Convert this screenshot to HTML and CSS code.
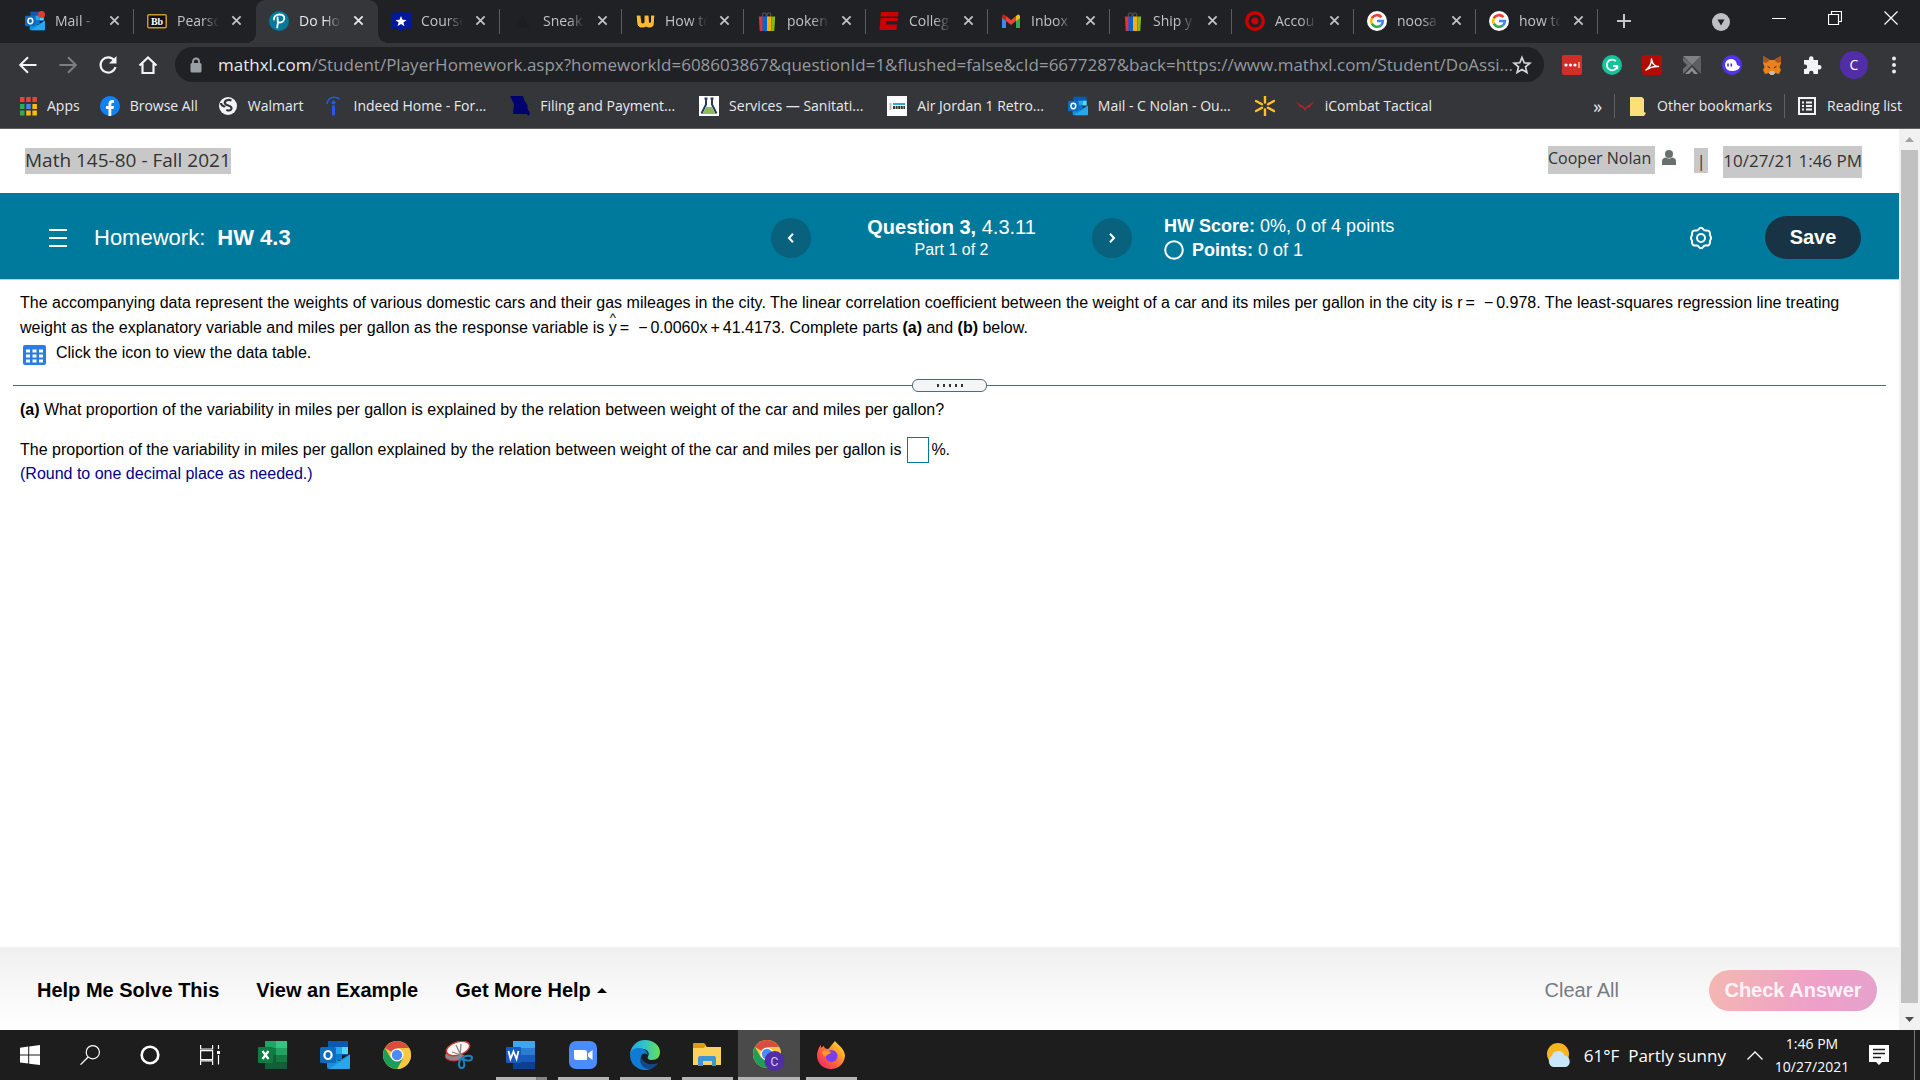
FILE: index.html
```html
<!DOCTYPE html>
<html lang="en">
<head>
<meta charset="utf-8">
<meta name="viewport" content="width=device-width, initial-scale=1">
<title>Do Homework - HW 4.3</title>
<link rel="stylesheet" href="styles.css">
</head>
<body>
<svg class="defs" aria-hidden="true">
  <symbol id="close" viewBox="0 0 12 12"><path d="M1.5 1.5l9 9M10.500 1.500l-9 9" stroke="currentColor" stroke-width="2" fill="none"/></symbol>
  <symbol id="outlook" viewBox="0 0 30 28">
    <path d="M8 0h20v14H8z" fill="#0a5bb0"/><path d="M8 6h7v7H8z" fill="#0364b8"/><path d="M15 6h7v7h-7z" fill="#28a8ea"/><path d="M22 6h6v7h-6z" fill="#50d9ff"/><path d="M15 13h7v6h-7z" fill="#0078d4"/>
    <path d="M7 13l12 7 11-7v15H9a2 2 0 0 1-2-2z" fill="#1490df"/><path d="M30 14v12a2 2 0 0 1-2 2H9z" fill="#35b8f1" opacity=".6"/>
    <rect y="6" width="16" height="16" rx="1.500" fill="#0f6cbd"/><ellipse cx="8" cy="14" rx="3.600" ry="4" fill="none" stroke="#fff" stroke-width="2.200"/>
  </symbol>
  <symbol id="ebay" viewBox="0 0 20 22"><path d="M5 6V4a2 2 0 0 1 4 0v2M10 6V4a2 2 0 0 1 4 0v2" fill="none" stroke="#4c4c4c" stroke-width="1.500"/><path d="M1 6h5v16H2z" fill="#e53238"/><path d="M5 6h5v16H5z" fill="#0064d2"/><path d="M10 6h5v16h-5z" fill="#f5af02"/><path d="M15 6h4l-1 16h-3z" fill="#86b817"/></symbol>
  <symbol id="google" viewBox="0 0 20 20"><circle cx="10" cy="10" r="10" fill="#fff"/><g fill="none" stroke-width="2.600"><path d="M14.400 6.100A5.900 5.900 0 0 0 4.800 7.300" stroke="#ea4335"/><path d="M4.800 7.300a5.900 5.900 0 0 0 0 5.400" stroke="#fbbc05"/><path d="M4.800 12.700a5.900 5.900 0 0 0 9 1.700" stroke="#34a853"/><path d="M13.800 14.400A5.900 5.900 0 0 0 15.900 10H10" stroke="#4285f4"/></g></symbol>
  <symbol id="chrome" viewBox="0 0 28 28"><circle cx="14" cy="14" r="14" fill="#fbc740"/><path d="M14 14L1.900 7A14 14 0 0 1 26.100 7z" fill="#d94c40"/><path d="M14 7h12.100A14 14 0 0 1 14 28l6-10.500z" fill="#fbc740"/><path d="M1.900 7A14 14 0 0 0 14 28l6-10.500L8 17.500z" fill="#1d9c5a"/><circle cx="14" cy="14" r="6.500" fill="#fff"/><circle cx="14" cy="14" r="5.200" fill="#4c8bf5"/></symbol>
</svg>

<header class="browser">
  <div class="tabstrip">
    <div class="tab"><svg class="fav"><use href="#outlook"/></svg><span class="dot"></span><span class="title">Mail -</span><button class="x" aria-label="Close tab"><svg><use href="#close"/></svg></button></div>
    <div class="tab noline"><svg class="fav" viewBox="0 0 20 20"><rect x=".8" y="3.800" width="18.400" height="13" rx="1" fill="#111" stroke="#c99a2e" stroke-width="1.500"/><text x="10" y="14" font-family="Liberation Serif" font-weight="bold" font-size="10" text-anchor="middle" fill="#fff">Bb</text></svg><span class="title">Pearso</span><button class="x" aria-label="Close tab"><svg><use href="#close"/></svg></button></div>
    <div class="tab active noline"><svg class="fav" viewBox="0 0 20 20"><circle cx="10" cy="10" r="10" fill="#037a9c"/><path d="M8.200 16.500c.8-3 .8-6.500.3-10M5 8.500c-.5-3 2-5 5.500-5 3 0 4.800 1.500 4.800 3.800 0 2.700-2.200 4.300-5.500 4.200" fill="none" stroke="#fff" stroke-width="1.800" stroke-linecap="round"/></svg><span class="title">Do Ho</span><button class="x" aria-label="Close tab"><svg><use href="#close"/></svg></button></div>
    <div class="tab"><svg class="fav" viewBox="0 0 20 20"><path d="M0 1l3 1 7-1 7 1 3-1v17l-5-1-5 3-5-3-5 1z" fill="#00189b"/><path d="M10 5l1.500 3.700 4 .2-3.100 2.500 1.100 3.900L10 13.100l-3.500 2.200 1.100-3.900-3.100-2.500 4-.2z" fill="#fff"/></svg><span class="title">Course</span><button class="x" aria-label="Close tab"><svg><use href="#close"/></svg></button></div>
    <div class="tab"><svg class="fav" viewBox="0 0 20 20"><path d="M3 17l7-13 7 13z" fill="#1d1e21"/></svg><span class="title">Sneak</span><button class="x" aria-label="Close tab"><svg><use href="#close"/></svg></button></div>
    <div class="tab"><svg class="fav" viewBox="0 0 20 20"><path d="M1 4h5v1.500L7 12l2-.5V4h5l.5 7.500 1-.5V4H20l-1 11-3 2h-3l-2-1-2 1H5l-3-3z" fill="#fdb933" stroke="#15161a"/></svg><span class="title">How to</span><button class="x" aria-label="Close tab"><svg><use href="#close"/></svg></button></div>
    <div class="tab"><svg class="fav"><use href="#ebay"/></svg><span class="title">poken</span><button class="x" aria-label="Close tab"><svg><use href="#close"/></svg></button></div>
    <div class="tab"><svg class="fav" viewBox="0 0 20 20"><path d="M2 1h17.500l-.5 4.500H1.500zM1.500 7H19l-.4 3H7.500l-.3 3.500H18L17.500 19H.5z" fill="#c00"/></svg><span class="title">Colleg</span><button class="x" aria-label="Close tab"><svg><use href="#close"/></svg></button></div>
    <div class="tab"><svg class="fav" viewBox="0 0 20 20"><path d="M1 5v12h4V9z" fill="#4285f4"/><path d="M19 5v12h-4V9z" fill="#34a853"/><path d="M1 5.500V7l4 3V5L3.500 3.800A1.700 1.700 0 0 0 1 5.500z" fill="#c5221f"/><path d="M15 5v5l4-3V5.500a1.700 1.700 0 0 0-2.500-1.700z" fill="#fbbc04"/><path d="M5 5l5 4 5-4v5l-5 4-5-4z" fill="#ea4335"/></svg><span class="title">Inbox</span><button class="x" aria-label="Close tab"><svg><use href="#close"/></svg></button></div>
    <div class="tab"><svg class="fav"><use href="#ebay"/></svg><span class="title">Ship y</span><button class="x" aria-label="Close tab"><svg><use href="#close"/></svg></button></div>
    <div class="tab"><svg class="fav" viewBox="0 0 20 20"><circle cx="10" cy="10" r="8.300" fill="none" stroke="#c00" stroke-width="3.400"/><circle cx="10" cy="10" r="3.400" fill="#c00"/></svg><span class="title">Accou</span><button class="x" aria-label="Close tab"><svg><use href="#close"/></svg></button></div>
    <div class="tab"><svg class="fav"><use href="#google"/></svg><span class="title">noosa</span><button class="x" aria-label="Close tab"><svg><use href="#close"/></svg></button></div>
    <div class="tab"><svg class="fav"><use href="#google"/></svg><span class="title">how to</span><button class="x" aria-label="Close tab"><svg><use href="#close"/></svg></button></div>
    <button class="newtab" aria-label="New tab"><svg viewBox="0 0 16 16"><path d="M8 1v14M1 8h14" stroke="#c4c7cb" stroke-width="2"/></svg></button>
    <div class="winctl">
      <button aria-label="Search tabs"><svg width="18" height="18" viewBox="0 0 18 18"><circle cx="9" cy="9" r="9" fill="#bcc0c4"/><path d="M5.500 6.500h7L9 12.500z" fill="#202124"/></svg></button>
      <button aria-label="Minimize"><svg width="14" height="14" viewBox="0 0 14 14"><path d="M0 7.500h14" stroke="#fff"/></svg></button>
      <button aria-label="Restore"><svg width="14" height="14" viewBox="0 0 14 14"><path d="M.5 3.500h10v10H.5zM3.500 3.500v-3h10v10h-3" fill="none" stroke="#fff" stroke-width="1.200"/></svg></button>
      <button aria-label="Close window"><svg width="14" height="14" viewBox="0 0 14 14"><path d="M.5.5l13 13M13.500.5l-13 13" stroke="#fff" stroke-width="1.200"/></svg></button>
    </div>
  </div>

  <nav class="toolbar" aria-label="Browser toolbar">
    <button aria-label="Back"><svg viewBox="0 0 20 20"><path d="M18.500 10h-16M10 2.200L2.200 10l7.800 7.800" fill="none" stroke="#f1f3f4" stroke-width="2"/></svg></button>
    <button aria-label="Forward"><svg viewBox="0 0 20 20"><path d="M1.500 10h16M10 2.200l7.800 7.800-7.800 7.800" fill="none" stroke="#7b7e82" stroke-width="2"/></svg></button>
    <button aria-label="Reload"><svg viewBox="0 0 20 20"><path d="M16.300 5.500A7.600 7.600 0 1 0 17.500 12" fill="none" stroke="#f1f3f4" stroke-width="2.100"/><path d="M18.500 1v7.500H11z" fill="#f1f3f4"/></svg></button>
    <button aria-label="Home"><svg viewBox="0 0 20 20"><path d="M1.500 10.500L10 2.500l8.500 8M4.500 8.500V18h11V8.500" fill="none" stroke="#f1f3f4" stroke-width="2.200"/></svg></button>
    <div class="omnibox">
      <svg class="lock" viewBox="0 0 12 16"><path d="M3 7V4.500a3 3 0 0 1 6 0V7" fill="none" stroke="#9aa0a6" stroke-width="1.800"/><rect x=".5" y="6" width="11" height="9.500" rx="1.500" fill="#9aa0a6"/></svg>
      <label for="address">mathxl.com</label><input id="address" type="text" value="/Student/PlayerHomework.aspx?homeworkId=608603867&amp;questionId=1&amp;flushed=false&amp;cId=6677287&amp;back=https://www.mathxl.com/Student/DoAssi...">
      <button aria-label="Bookmark this tab"><svg viewBox="0 0 20 20"><path d="M10 2.500l2.200 5.300 5.700.4-4.400 3.700 1.400 5.600-4.900-3-4.900 3 1.400-5.600-4.400-3.700 5.700-.4z" fill="none" stroke="#d5d8db" stroke-width="1.700"/></svg></button>
    </div>
    <div class="exts">
      <button aria-label="Password manager"><svg viewBox="0 0 20 20"><rect width="20" height="20" rx="2" fill="#d32d27"/><circle cx="4" cy="10" r="1.600" fill="#fff"/><circle cx="8.500" cy="10" r="1.600" fill="#fff"/><circle cx="13" cy="10" r="1.600" fill="#fff"/><path d="M17 7v6" stroke="#fff"/></svg></button>
      <button aria-label="Grammar checker"><svg viewBox="0 0 20 20"><circle cx="10" cy="10" r="10" fill="#15c39a"/><path d="M13.800 6.200A5.300 5.300 0 1 0 15.300 11H11M15.300 11v3.300" fill="none" stroke="#fff" stroke-width="1.800"/></svg></button>
      <button aria-label="PDF tools"><svg viewBox="0 0 20 20"><rect width="20" height="20" rx="3" fill="#b30b00"/><path d="M4 15c3-2 6-6.500 5.500-11 .8 5 3.500 7.500 7 7.500C12 11 7.500 12.500 4 15z" fill="none" stroke="#fff" stroke-width="1.500" stroke-linejoin="round"/></svg></button>
      <button aria-label="Page marker"><svg viewBox="0 0 20 20"><path d="M1 1h18L10 10z" fill="#7e8082"/><path d="M19 1v18L10 10z" fill="#5c5e60"/><path d="M1 2l9 8-9 9v-5l4-4-4-4z" fill="#6b6d6f"/><path d="M10 12l6 7h-4l-2-3-3 3H3z" fill="#8b8d8f"/></svg></button>
      <button aria-label="Ghost"><svg viewBox="0 0 20 20"><circle cx="10" cy="10" r="10" fill="#5333ed"/><path d="M3.500 12C2 8 5 3.500 9.500 4c4 .3 5 3 5.300 5.500 1 1.500 2.500 1 3.200 2-1 3.500-4.500 4.500-8 4.500-3 0-5.500-1-6.500-4z" fill="#fff"/><path d="M6 8.500v3M9.300 8.500v3" stroke="#4a35b5" stroke-width="1.600"/></svg></button>
      <button aria-label="Fox wallet"><svg viewBox="0 0 20 20"><path d="M1 1l7 4h4l7-4v7l-1.500 4 1.500 3-2 4-4-1-2 2H9l-2-2-4 1-2-4 1.500-3L1 8z" fill="#e8821e"/><path d="M1 1l7 4-4 3-3-1zM19 1l-7 4 4 3 3-1z" fill="#a9551d"/><path d="M5 11l3 1-.5 1.500zM15 11l-3 1 .5 1.500z" fill="#233447"/><path d="M8 16h4l1 2.500-2 1.500H9l-2-1.500z" fill="#c9bcb3"/></svg></button>
      <button aria-label="Extensions"><svg viewBox="0 0 20 20"><path d="M2 5h5V3.500a2 2 0 0 1 4.500 0V5H16v5h1.300a2.200 2.200 0 0 1 0 4.500H16V19h-4.500v-1a2.200 2.200 0 0 0-4.400 0v1H2v-5h1a2.200 2.200 0 0 0 0-4.400H2z" fill="#f1f3f4"/></svg></button>
      <button class="avatar" aria-label="Profile">C</button>
      <button class="kebab" aria-label="Menu"><svg viewBox="0 0 20 20"><g fill="#e8eaed"><circle cx="10" cy="3.500" r="2"/><circle cx="10" cy="10" r="2"/><circle cx="10" cy="16.500" r="2"/></g></svg></button>
    </div>
  </nav>

  <nav class="bookmarks" aria-label="Bookmarks">
    <a href="#"><svg class="apps" viewBox="0 0 17 20"><g fill="#ea4335"><path d="M0 1h4.500v5H0zM6.200 1h4.500v5H6.200zM12.400 1h4.500v5h-4.500z"/></g><path d="M0 8h4.500v5H0zM0 14.500h4.500v5H0z" fill="#34a853"/><path d="M6.200 8h4.500v5H6.200z" fill="#4285f4"/><path d="M12.400 8h4.500v5h-4.500zM6.200 14.500h4.500v5H6.200zM12.400 14.500h4.500v5h-4.500z" fill="#fbbc05"/></svg>Apps</a>
    <a href="#"><svg viewBox="0 0 20 20"><circle cx="10" cy="10" r="10" fill="#0f83f5"/><path d="M8.500 20v-7H6v-3h2.500V7.800C8.500 5.300 10 4 12.200 4l1.800.2v2.500h-1.200c-1.200 0-1.500.7-1.500 1.500V10H14l-.5 3h-2.200v7z" fill="#fff"/></svg>Browse All</a>
    <a href="#"><svg viewBox="0 0 20 20"><circle cx="10" cy="10" r="9" fill="#f1f3f4"/><path d="M13.500 4.500c-4-1.500-7.500.5-6.500 3s7 1.500 6.500 5c-.5 2.500-4 2.500-5 1M3 7c0 3 3 3 4 4" fill="none" stroke="#35363a" stroke-width="2.200"/></svg>Walmart</a>
    <a class="long" href="#"><svg viewBox="0 0 20 20"><path d="M3 8C4 1.500 10-.5 15.500 3" fill="none" stroke="#2557e8" stroke-width="1.600"/><circle cx="9.500" cy="6.500" r="2" fill="#2557e8"/><path d="M8 9.500h3V19l-1.500 1L8 19z" fill="#2557e8"/></svg>Indeed Home - For...</a>
    <a class="long" href="#"><svg viewBox="0 0 20 20"><path d="M0 0h13l1.500 5 3 4v4l2.500 4-1.500 3-2-2H3L4 8z" fill="#00006e"/></svg>Filing and Payment...</a>
    <a class="long" href="#"><svg viewBox="0 0 20 20"><path d="M0 0h20v20H0z" fill="#fff"/><path d="M5.500 2.500h3M7 2.500v6l-4.500 9M11.500 2.500h3M13 2.500v6l4.500 9" fill="none" stroke="#243b60" stroke-width="2"/><path d="M7 11h6l3.500 7h-13z" fill="#8dbb5c"/></svg>Services — Sanitati...</a>
    <a class="long" href="#"><svg viewBox="0 0 20 20"><path d="M0 0h20v20H0z" fill="#fff"/><path d="M6 8h12" stroke="#29a9d6" stroke-width="2"/><path d="M6 11.500h12" stroke="#333" stroke-width="3" stroke-dasharray="2 .6"/><path d="M3.500 7v7" stroke="#bbb" stroke-width="2"/></svg>Air Jordan 1 Retro...</a>
    <a class="long" href="#"><svg><use href="#outlook"/></svg>Mail - C Nolan - Ou...</a>
    <a href="#" aria-label="Walmart deals"><svg viewBox="0 0 20 20"><path d="M10 0v6.500M10 13.500V20M1 5l6 3.200M13 11.800L19 15M1 15l6-3.200M13 8.200L19 5" stroke="#ffc220" stroke-width="2.400" stroke-linecap="round"/></svg></a>
    <a href="#"><svg viewBox="0 0 20 20"><path d="M0 5l8 5 2 2 2-2 8-5-5 6-3 1-2 3-2-3-3-1z" fill="#a32630"/></svg>iCombat Tactical</a>
    <span class="more">»</span>
    <a class="side" href="#"><svg viewBox="0 0 20 20"><path d="M3 1h12l2 2v13l2 1-2 3H3z" fill="#fcdf78"/></svg>Other bookmarks</a>
    <a class="side" href="#"><svg viewBox="0 0 20 20"><path d="M2 2h16v16H2z" fill="none" stroke="#f1f3f4" stroke-width="2"/><path d="M5 6.500h2M9 6.500h6M5 10h2M9 10h6M5 13.500h2M9 13.500h6" stroke="#f1f3f4" stroke-width="1.800"/></svg>Reading list</a>
  </nav>
</header>

<div class="viewport">
  <main class="page">
    <div class="course">
      <h1 class="sel">Math 145-80 - Fall 2021</h1>
      <div class="user">
        <span class="sel name">Cooper Nolan</span>
        <svg class="person" viewBox="0 0 14 15"><circle cx="7" cy="4" r="4" fill="#6a6f70"/><path d="M0 15v-3.500C0 8.500 2 7.500 4 7.500c2 1.500 4 1.500 6 0 2 0 4 1 4 4V15z" fill="#6a6f70"/></svg>
        <span class="sel bar">|</span>
        <span class="sel date">10/27/21 1:46 PM</span>
      </div>
    </div>

    <div class="hwbar">
      <div class="hwname">
        <button class="plain" aria-label="Open menu"><svg width="18" height="18" viewBox="0 0 18 18"><path d="M0 1h18M0 9h18M0 17h18" stroke="#fff" stroke-width="2"/></svg></button>
        <h2>Homework: <b>HW 4.3</b></h2>
      </div>
      <div class="question">
        <button class="round" aria-label="Previous question"><svg width="8" height="10" viewBox="0 0 8 10"><path d="M6 .8L2 5l4 4.200" fill="none" stroke="#fff" stroke-width="2"/></svg></button>
        <div class="qtext"><p><b>Question 3,</b> 4.3.11</p><p class="part">Part 1 of 2</p></div>
        <button class="round" aria-label="Next question"><svg width="8" height="10" viewBox="0 0 8 10"><path d="M2 .8L6 5 2 9.200" fill="none" stroke="#fff" stroke-width="2"/></svg></button>
      </div>
      <div class="score"><p><b>HW Score:</b> 0%, 0 of 4 points</p><p class="pts"><svg width="20" height="20" viewBox="0 0 20 20"><circle cx="10" cy="10" r="8.800" fill="none" stroke="#fff" stroke-width="2"/></svg><span><b>Points:</b> 0 of 1</span></p></div>
      <button class="plain gear" aria-label="Settings"><svg width="22" height="24" viewBox="0 0 22 24"><path d="M8.500 3.500Q11 0 13.500 3.500q.8 1.200 2.300 1 4.200-.6 4.200 3.500-.2 1.300.5 2.300 1 1.700 0 3.400-.7 1-.5 2.300 0 4.100-4.200 3.500-1.500-.2-2.300 1Q11 24 8.500 20.500q-.8-1.200-2.300-1Q2 20.100 2 16q.2-1.300-.5-2.300-1-1.700 0-3.400Q2.200 9.300 2 8q0-4.100 4.200-3.500 1.500.2 2.300-1z" fill="none" stroke="#fff" stroke-width="2"/><circle cx="11" cy="12" r="4" fill="none" stroke="#fff" stroke-width="2"/></svg></button>
      <button class="save">Save</button>
    </div>

    <section class="problem">
      <p>The accompanying data represent the weights of various domestic cars and their gas mileages in the city. The linear correlation coefficient between the weight of a car and its miles per gallon in the city is r<span class="op">=</span><span class="op neg">−</span>0.978. The least-squares regression line treating weight as the explanatory variable and miles per gallon as the response variable is <span class="hat">y</span><span class="op">=</span><span class="op neg">−</span>0.0060x<span class="op">+</span>41.4173. Complete parts <b>(a)</b> and <b>(b)</b> below.</p>
      <button class="datalink"><svg width="23" height="20" viewBox="0 0 23 20"><rect width="23" height="20" rx="2" fill="#2a7de1"/><path d="M3 4.500h4v3H3zM9.500 4.500h4v3h-4zM16 4.500h4v3h-4zM3 9.500h4v3H3zM9.500 9.500h4v3h-4zM16 9.500h4v3h-4zM3 14.500h4v3H3zM9.500 14.500h4v3h-4zM16 14.500h4v3h-4z" fill="#fff"/></svg>Click the icon to view the data table.</button>
    </section>

    <div class="divider"><button aria-label="Resize panes"><i></i><i></i><i></i><i></i><i></i></button></div>

    <section class="answer">
      <p><b>(a)</b> What proportion of the variability in miles per gallon is explained by the relation between weight of the car and miles per gallon?</p>
      <p class="fill"><label for="ans">The proportion of the variability in miles per gallon explained by the relation between weight of the car and miles per gallon is</label><input id="ans" type="text">%.</p>
      <p class="hint">(Round to one decimal place as needed.)</p>
    </section>

    <footer class="actions">
      <button>Help Me Solve This</button>
      <button>View an Example</button>
      <button>Get More Help <svg width="10" height="6" viewBox="0 0 10 6"><path d="M0 6l5-5 5 5z" fill="#000"/></svg></button>
      <button class="clear">Clear All</button>
      <button class="check">Check Answer</button>
    </footer>
  </main>
  <div class="scroll" aria-hidden="true">
    <svg viewBox="0 0 21 21"><path d="M6 13l4.500-5 4.500 5z" fill="#a3a3a3"/></svg>
    <div class="thumb"></div>
    <svg class="down" viewBox="0 0 21 27"><path d="M6 14l4.500 5 4.500-5z" fill="#505050"/></svg>
  </div>
</div>

<div class="taskbar">
  <div class="group">
    <button class="sys" aria-label="Start"><svg width="20" height="20" viewBox="0 0 20 20"><path d="M0 2.800l8.200-1.200v8H0zM9.200 1.400L20 0v9.600H9.200zM0 10.600h8.200v8L0 17.400zM9.200 10.600H20V20L9.200 18.700z" fill="#fff"/></svg></button>
    <button class="sys" aria-label="Search"><svg width="20" height="20" viewBox="0 0 20 20"><circle cx="12.800" cy="7.200" r="6.600" fill="none" stroke="#fff" stroke-width="1.200"/><path d="M8.200 12L.5 19.600" stroke="#fff" stroke-width="1.300"/></svg></button>
    <button class="sys" aria-label="Cortana"><svg width="20" height="20" viewBox="0 0 20 20"><circle cx="10" cy="10" r="8.300" fill="none" stroke="#fff" stroke-width="2.600"/></svg></button>
    <button class="sys" aria-label="Task view"><svg width="20" height="20" viewBox="0 0 20 20"><path d="M.6 0v4h12V0M.6 20v-4h12v4M.6 5.600h12v9H.6zM18.500 0v4M18.500 10v9.500" fill="none" stroke="#fff" stroke-width="1.200"/><path d="M17 6h3v3h-3z" fill="#fff"/></svg></button>
  </div>
  <button class="app" aria-label="Excel"><svg width="30" height="28" viewBox="0 0 30 28"><path d="M7 0h22v28H7z" fill="#21a366"/><path d="M18 0h11v7H18z" fill="#33c481"/><path d="M7 7h11v7H7zM18 14h11v7H18z" fill="#107c41"/><path d="M7 14h11v7H7z" fill="#185c37"/><path d="M7 21h22v7H7z" fill="#185c37"/><rect y="6" width="15" height="16" rx="1" fill="#107c41"/><path d="M4.500 10l6 8M10.500 10l-6 8" stroke="#fff" stroke-width="2.200"/></svg></button>
  <button class="app" aria-label="Outlook"><svg width="30" height="28"><use href="#outlook"/></svg></button>
  <button class="app" aria-label="Chrome"><svg width="28" height="28"><use href="#chrome"/></svg></button>
  <button class="app" aria-label="Snip"><svg width="28" height="28" viewBox="0 0 28 28"><ellipse cx="9" cy="15" rx="9" ry="5" fill="#888" stroke="#c33"/><ellipse cx="13" cy="7.500" rx="12" ry="6.500" transform="rotate(-18 13 7.500)" fill="#f6f6f6" stroke="#d33a32" stroke-width="1.400"/><path d="M11 4l6 13M7 11l12 4M16 3l-1 12" stroke="#888" stroke-width="1.300"/><path d="M17 17c4-3 10-3 10 0s-5 4-10 0zM17 17c-4 3-4 10-.5 10s4-5 .5-10z" fill="none" stroke="#1b83c6" stroke-width="2"/></svg></button>
  <button class="app open multi" aria-label="Word"><svg width="30" height="28" viewBox="0 0 30 28"><path d="M7 0h22v28H7z" fill="#2b7cd3"/><path d="M7 0h22v7H7z" fill="#41a5ee"/><path d="M7 14h22v7H7z" fill="#185abd"/><path d="M7 21h22v7H7z" fill="#103f91"/><rect y="6" width="15" height="16" rx="1" fill="#185abd"/><path d="M2.500 10l2 8 3-7.500 3 7.500 2-8" fill="none" stroke="#fff" stroke-width="1.800"/></svg></button>
  <button class="app open" aria-label="Zoom"><svg width="28" height="28" viewBox="0 0 28 28"><rect width="28" height="28" rx="7" fill="#4a8cff"/><path d="M5 9h10.500a2.500 2.500 0 0 1 2.500 2.500V19H7.500A2.500 2.500 0 0 1 5 16.500zM19 12.500L23.500 9v10L19 15.500z" fill="#fff"/></svg></button>
  <button class="app open" aria-label="Edge"><svg width="30" height="30" viewBox="0 0 30 30"><defs><linearGradient id="eg"><stop offset="0" stop-color="#1fa7e0"/><stop offset=".5" stop-color="#34c2c8"/><stop offset="1" stop-color="#6be04f"/></linearGradient></defs><path d="M0 15A15 15 0 0 1 15 0c9 0 15 6 15 12 0 5-3 8-8 8-4 0-5-2-4-3.500 2-3 0-7-4.500-7.500C7 8.500 1 12 0 15z" fill="url(#eg)"/><path d="M0 16C0 9 7 7 12 8.500c4 1.200 6 4 5.500 6.500-3-3-6-1-6.500 2-1 6 5 13 13 10A15 15 0 0 1 0 16z" fill="#0f7bd4"/><path d="M11 17c-3 5 2 13 9 12 4-1 7-4 8-6-7 3-14 1-17-6z" fill="#114a8b"/></svg></button>
  <button class="app open" aria-label="File Explorer"><svg width="28" height="24" viewBox="0 0 28 24"><path d="M0 1h11l3 3h14v18H0z" fill="#fdd25b"/><path d="M0 1a1 1 0 0 1 1-1h10l2 2-2 3H0z" fill="#dd9a09"/><path d="M5 23v-8a2 2 0 0 1 2-2h14a2 2 0 0 1 2 2v8h-4v-5h-9v5z" fill="#3e95d5"/></svg></button>
  <button class="app open current" aria-label="Chrome profile"><svg width="32" height="32" viewBox="0 0 32 32"><svg x="0" y="1" width="28" height="28"><use href="#chrome"/></svg><circle cx="21.500" cy="22" r="10" fill="#512da8"/><text x="21.500" y="26.500" font-family="Roboto" font-size="12" text-anchor="middle" fill="#d9cff2">C</text></svg></button>
  <button class="app open" aria-label="Firefox"><svg width="28" height="28" viewBox="0 0 28 28"><defs><linearGradient id="ff" x1="1" y1="0" x2="0" y2="1"><stop offset=".1" stop-color="#ffe226"/><stop offset=".5" stop-color="#ff7139"/><stop offset="1" stop-color="#f5156c"/></linearGradient></defs><path d="M18 0c2 3 9 7 10 14 0 8-6 14-14 14S0 22 0 15C0 9 3 5 4 4v3c1-1 2-2 3-2 0 2 2 3 4 3 2-1 4-5 7-8z" fill="url(#ff)"/><circle cx="14.500" cy="15" r="6" fill="#7a3ff0"/><path d="M5 11c3-3 7-1 9 0-1 3-5 2-5 5-2-1-4-2-4-5z" fill="#ff9a1f"/></svg></button>
  <div class="tray">
    <svg width="26" height="25" viewBox="0 0 26 25"><circle cx="12" cy="11" r="11" fill="#fbb322"/><path d="M7 24a6 6 0 0 1-1-11 6.500 6.500 0 0 1 12.500-.5A6 6 0 0 1 20 24z" fill="#c9e6f8"/></svg>
    <span class="weather">61°F&nbsp; Partly sunny</span>
    <svg width="16" height="9" viewBox="0 0 16 9"><path d="M.5 8.500L8 1l7.500 7.500" fill="none" stroke="#fff" stroke-width="1.300"/></svg>
    <div class="clock"><span>1:46 PM</span><span>10/27/2021</span></div>
    <svg class="note" width="20" height="20" viewBox="0 0 20 20"><path d="M0 0h20v17h-7l-3 3-3-3H0z" fill="#fff"/><path d="M4 4.500h12M4 8.500h12M4 12.500h8" stroke="#1d1d1d" stroke-width="1.300"/></svg>
  </div>
</div>
</body>
</html>
```
FILE: styles.css
```css
* { box-sizing: border-box; }
body {
  margin: 0;
  min-height: 100vh;
  display: flex;
  flex-direction: column;
  background: #fff;
  font-family: "Liberation Sans", Arial, sans-serif;
  font-size: 16px;
  color: #000;
}
p, h1, h2 { margin: 0; font-weight: normal; }
button {
  font: inherit;
  color: inherit;
  background: none;
  border: 0;
  padding: 0;
  display: flex;
  align-items: center;
  justify-content: center;
  flex: none;
}
svg { flex: none; display: block; }
.defs { position: absolute; width: 0; height: 0; }

/* Browser chrome */
.browser {
  background: #35363a;
  border-bottom: 1px solid #5f6064;
  font-family: "Open Sans", "Noto Sans", sans-serif;
  color: #e8eaed;
}
.tabstrip {
  display: flex;
  height: 43px;
  padding-left: 12px;
  background: #202124;
}
.tab {
  flex: 0 1 122px;
  min-width: 0;
  display: flex;
  align-items: center;
  padding: 0 0 2px 13px;
  position: relative;
  font-size: 14px;
  color: #bfc2c6;
}
.tab::after {
  content: "";
  position: absolute;
  right: 0;
  top: 9px;
  width: 1px;
  height: 25px;
  background: #5a5c60;
}
.tab.noline::after { display: none; }
.tab.active { background: #35363a; border-radius: 9px 9px 0 0; color: #e8eaed; }
.tab.active::before {
  content: "";
  position: absolute;
  left: -10px;
  right: -10px;
  bottom: 0;
  height: 10px;
  background:
    radial-gradient(circle at 0 0, transparent 10px, #35363a 10px) left / 10px 10px no-repeat,
    radial-gradient(circle at 100% 0, transparent 10px, #35363a 10px) right / 10px 10px no-repeat;
}
.fav { width: 20px; height: 20px; margin-right: 10px; }
.dot {
  position: absolute;
  left: 26px;
  top: 11px;
  width: 7px;
  height: 7px;
  border-radius: 50%;
  background: #e23b35;
}
.title {
  width: 42px;
  white-space: nowrap;
  -webkit-mask-image: linear-gradient(90deg, #000 60%, transparent);
  mask-image: linear-gradient(90deg, #000 60%, transparent);
}
.x { margin-left: 12px; }
.x svg { width: 11px; height: 11px; }
.newtab { margin-left: 18px; padding-bottom: 2px; }
.newtab svg { width: 16px; height: 16px; }
.winctl { margin: 0 22px 8px auto; display: flex; align-items: center; gap: 42px; }
.winctl button:first-child { align-self: flex-end; margin-bottom: 4px; }

.toolbar { display: flex; align-items: center; height: 45px; padding: 0 20px 2px 18px; }
.toolbar > button { width: 20px; margin-right: 20px; }
.toolbar button svg { width: 20px; height: 20px; }
.omnibox {
  flex: 1;
  min-width: 0;
  height: 35px;
  display: flex;
  align-items: center;
  padding: 0 12px 0 15px;
  border-radius: 18px;
  background: #202124;
  font-size: 17px;
}
.toolbar > button:nth-of-type(4) { margin-right: 17px; }
.omnibox .lock { width: 12px; height: 16px; margin-right: 16px; }
.omnibox input {
  flex: 1;
  min-width: 0;
  border: 0;
  padding: 0;
  outline: 0;
  background: none;
  font: inherit;
  color: #969a9f;
}
.exts { display: flex; align-items: center; gap: 20px; margin-left: 18px; }
.exts .avatar {
  width: 28px;
  height: 28px;
  margin-left: -2px;
  border-radius: 50%;
  background: #512da8;
  color: #fff;
  font-size: 14px;
}
.exts .kebab { width: 20px; margin-right: -4px; margin-left: -4px; }

.bookmarks { display: flex; align-items: center; height: 40px; padding: 0 18px 5px 20px; gap: 20px; font-size: 14px; white-space: nowrap; }
.bookmarks a { display: flex; align-items: center; gap: 10px; color: inherit; text-decoration: none; }
.bookmarks .long { padding-right: 4px; }
.bookmarks svg { width: 20px; height: 20px; }
.bookmarks .apps { width: 17px; }
.more { margin-left: auto; font-size: 18px; margin-right: -8px; }
.side { border-left: 1px solid #5f6064; padding-left: 12px; margin-right: -8px; height: 24px; }
.side:last-child { margin-right: 0; }

/* Page */
.viewport { flex: 1; display: flex; }
.page { flex: 1; min-width: 0; display: flex; flex-direction: column; }
.course {
  display: flex;
  justify-content: space-between;
  align-items: flex-start;
  height: 64px;
  padding: 17px 37px 0 25px;
  font-family: "Open Sans", "Noto Sans", sans-serif;
  color: #333;
}
.sel { background: #c8c8c8; white-space: nowrap; }
.course h1 { font-size: 19px; line-height: 24px; margin-top: 2px; padding-bottom: 2px; }
.user { display: flex; align-items: flex-start; font-size: 17px; }
.name { font-size: 16px; line-height: 24px; padding: 0 4px 4px 0; }
.person { width: 14px; height: 15px; margin: 4px 18px 0 7px; }
.bar { line-height: 25px; margin: 2px 15px 0 0; width: 14px; text-align: center; }
.date { line-height: 30px; padding-bottom: 2px; }

.hwbar {
  display: grid;
  grid-template-columns: 44fr 22fr 34fr auto auto;
  align-items: center;
  height: 87px;
  padding: 3px 38px 0 49px;
  background: #007a9c;
  border-bottom: 1px solid #b5d3de;
  color: #fff;
  font-size: 18px;
}
.hwname { display: flex; align-items: center; gap: 27px; }
.hwname h2 { font-size: 22px; }
.hwname b { margin-left: 6px; }
.question { display: flex; align-items: center; justify-content: space-between; }
.round { width: 40px; height: 40px; border-radius: 50%; background: #08627d; }
.qtext { text-align: center; font-size: 20px; line-height: 24px; }
.part { font-size: 16px; line-height: 22px; }
.score { padding-left: 32px; line-height: 24px; }
.pts { display: flex; align-items: center; gap: 8px; }
.gear { margin-right: 53px; }
.save { width: 96px; height: 43px; border-radius: 22px; background: #183444; font-size: 20px; font-weight: bold; }

.problem, .answer { padding: 0 20px; line-height: 25px; }
.problem { padding-top: 10px; }
.op { margin: 0 3px; }
.neg { margin-left: 6px; }
.hat { position: relative; }
.hat::before { content: "^"; position: absolute; left: 1px; top: -9px; font-size: 13px; line-height: 16px; }
.datalink { gap: 10px; margin-left: 3px; line-height: 23px; }
.datalink svg { margin-top: 5px; }
.divider {
  display: flex;
  align-items: center;
  justify-content: center;
  height: 13px;
  margin: 14px 13px 0 13px;
  background: linear-gradient(#54687a, #54687a) center / 100% 1px no-repeat;
}
.divider button { width: 75px; height: 13px; gap: 4px; border: 1px solid #54687a; border-radius: 6px; background: #f4f5f7; }
.divider i { width: 2px; height: 3px; background: #333; }
.answer { padding-top: 5px; }
.answer .fill { display: flex; align-items: center; margin-top: 15px; line-height: 26px; }
.fill input { width: 22px; height: 26px; margin: 0 2px 0 6px; padding: 0; border: 1px solid #007a9c; background: #fff; }
.answer .hint { line-height: 21px; color: #00008b; }

.actions {
  display: flex;
  align-items: center;
  gap: 37px;
  height: 83px;
  margin-top: auto;
  padding: 3px 22px 0 37px;
  background: linear-gradient(#f0f0f0, #fff);
  font-size: 20px;
  font-weight: bold;
}
.actions button:nth-child(3) { gap: 6px; }
.actions .clear { margin: 0 53px 0 auto; font-weight: normal; color: #777b82; }
.actions .check { width: 168px; height: 41px; border-radius: 21px; color: #fbf3f8; background: linear-gradient(110deg, #f4b8b0, #eda0c9 65%, #e5a2cb); }

.scroll { width: 21px; display: flex; flex-direction: column; background: #f1f1f1; }
.scroll svg { width: 21px; height: 21px; }
.scroll .down { height: 27px; }
.thumb { flex: 1; margin: 0 2px; background: #c1c1c1; }

/* Taskbar */
.taskbar { display: flex; height: 50px; background: #1d1d1d; color: #fff; font-family: "Open Sans", "Noto Sans", sans-serif; }
.group { display: flex; margin-right: 2px; }
.sys { width: 60px; }
.app { width: 62px; position: relative; }
.app.open::after { content: ""; position: absolute; left: 6px; right: 5px; bottom: 0; height: 3px; background: #b5b5b5; }
.app.multi::after { background: linear-gradient(90deg, #b5b5b5 78%, #666 78%, #858585 80%); }
.app.current { background: #4a4a4a; }
.app.current::after { left: 0; right: 0; }
.tray { margin-left: auto; margin-right: 5px; padding-right: 25px; border-right: 1px solid #777; display: flex; align-items: center; }
.weather { font-size: 17px; margin: 0 21px 0 12px; }
.clock { display: flex; flex-direction: column; align-items: center; font-size: 14px; line-height: 23px; width: 98px; }
.note { margin-left: 8px; }
```
